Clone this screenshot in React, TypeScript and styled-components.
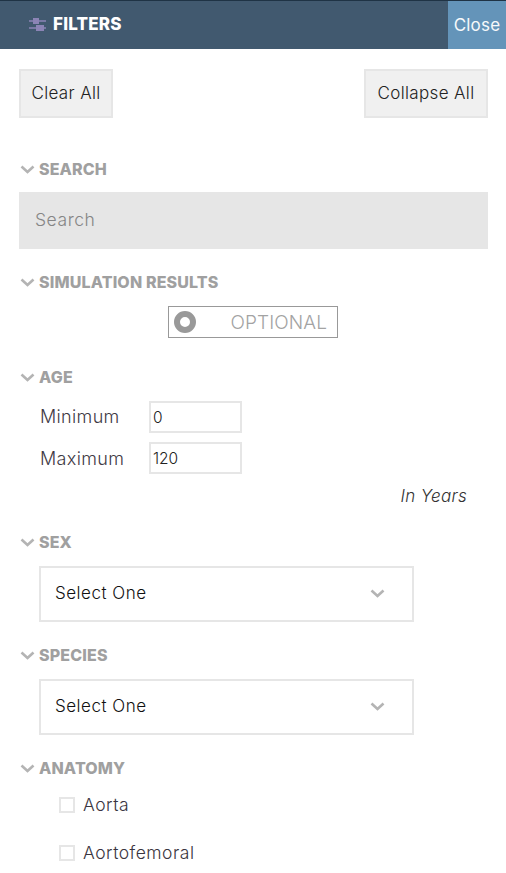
import React from 'react';
import styled, { createGlobalStyle } from 'styled-components';

const GlobalStyle = createGlobalStyle`
  html, body {
    margin: 0;
    padding: 0;
    background: #fff;
    overflow: hidden;
  }
  * { box-sizing: border-box; }
`;

const Panel = styled.div`
  width: 506px;
  height: 873px;
  overflow: hidden;
  font-family: Inter, 'Liberation Sans', sans-serif;
  color: #222;
`;

const Header = styled.header`
  height: 49px;
  background: #41596f;
  border-top: 1px solid #1f3345;
  display: flex;
  align-items: stretch;
  justify-content: space-between;
`;

const HeaderTitle = styled.div`
  display: flex;
  align-items: center;
  gap: 7px;
  padding: 0 0 2px 29px;
  color: #fff;
  font-size: 17px;
  font-weight: 800;
  letter-spacing: 0.2px;
`;

const CloseButton = styled.div`
  width: 58px;
  background: #6494b9;
  color: #f7f9fb;
  font-size: 17px;
  letter-spacing: 0.2px;
  padding-bottom: 1px;
  display: flex;
  align-items: center;
  justify-content: center;
`;

const Actions = styled.div`
  display: flex;
  justify-content: space-between;
  padding: 20px 18px 0 19px;
`;

const ActionButton = styled.div<{ $width: number }>`
  width: ${(p) => p.$width}px;
  height: 49px;
  padding-bottom: 2px;
  background: #f0f0f0;
  border: 2px solid #e6e6e6;
  display: flex;
  align-items: center;
  justify-content: center;
  font-size: 17px;
  font-weight: 300;
  letter-spacing: 0.35px;
  color: #222;
`;

const Section = styled.section<{ $top: number }>`
  margin-top: ${(p) => p.$top}px;
`;

const SectionTitle = styled.div`
  height: 20px;
  padding-left: 20px;
  display: flex;
  align-items: center;
  gap: 4px;
  color: #a0a0a0;
  font-size: 16px;
  font-weight: 800;
  letter-spacing: 0.15px;
`;

const SearchBox = styled.div`
  margin: 13px 18px 0 19px;
  height: 57px;
  padding: 0 0 2px 16px;
  background: #e6e6e6;
  color: #858585;
  font-size: 17.5px;
  font-weight: 300;
  letter-spacing: 0.55px;
  display: flex;
  align-items: center;
`;

const Toggle = styled.div`
  margin: 14px 0 0 168px;
  width: 170px;
  height: 32px;
  border: 1px solid #999;
  display: flex;
  align-items: center;
  justify-content: space-between;
  padding: 0 10px 0 5px;
  color: #a3a3a3;
  font-size: 19px;
  font-weight: 300;
  letter-spacing: 0.1px;
`;

const ToggleKnob = styled.span`
  width: 22px;
  height: 22px;
  border-radius: 50%;
  border: 6px solid #999;
  background: #fff;
`;

const AgeRows = styled.div`
  margin-top: 14px;
  padding-left: 40px;
  display: flex;
  flex-direction: column;
  gap: 9px;
`;

const AgeRow = styled.div`
  display: flex;
  align-items: center;
`;

const AgeLabel = styled.span<{ $lift: number }>`
  width: 109px;
  padding-bottom: ${(p) => p.$lift}px;
  font-size: 18px;
  font-weight: 300;
  letter-spacing: 0.35px;
  color: #3f3a45;
`;

const NumberBox = styled.div`
  width: 93px;
  height: 32px;
  border: 2px solid #e6e6e6;
  padding-left: 2px;
  display: flex;
  align-items: center;
  font-size: 15.5px;
  font-weight: 300;
  color: #222;
`;

const Units = styled.div`
  margin-top: 12px;
  padding-right: 39px;
  text-align: right;
  font-size: 17px;
  font-style: italic;
  font-weight: 300;
  letter-spacing: 0.3px;
  color: #333;
  line-height: 20px;
`;

const SelectBox = styled.div`
  margin: 14px 0 0 39px;
  width: 375px;
  height: 56px;
  border: 2px solid #e6e6e6;
  display: flex;
  align-items: center;
  justify-content: space-between;
  padding: 0 27px 2px 14px;
  font-size: 17px;
  font-weight: 300;
  letter-spacing: 0.5px;
  color: #111;
`;

const CheckList = styled.div`
  margin-top: 19px;
  padding-left: 59px;
  display: flex;
  flex-direction: column;
  gap: 32px;
`;

const CheckRow = styled.div`
  display: flex;
  align-items: center;
  gap: 8px;
  height: 16px;
  font-size: 17.5px;
  font-weight: 300;
  letter-spacing: 0.5px;
  color: #3a3540;
`;

const CheckLabel = styled.span`
  margin-top: -2px;
`;

const CheckBox = styled.span`
  width: 16px;
  height: 16px;
  border: 2px solid #e6e6e6;
  background: #fff;
`;

const Chevron: React.FC = () => (
  <svg width="15" height="9" viewBox="0 0 15 9" aria-hidden="true">
    <path d="M1.5 1.5 7.5 7 13.5 1.5" fill="none" stroke="#b4b4b4" strokeWidth="2.6" />
  </svg>
);

const SlidersIcon: React.FC = () => (
  <svg width="17" height="15" viewBox="0 0 17 15" aria-hidden="true">
    <g fill="#8b84b5">
      <rect x="0" y="3" width="17" height="2" opacity="0.75" />
      <rect x="4" y="1" width="6" height="6" />
      <rect x="0" y="10" width="17" height="2" opacity="0.75" />
      <rect x="7" y="8" width="8" height="6" />
    </g>
  </svg>
);

const App: React.FC = () => (
  <Panel>
    <GlobalStyle />
    <Header>
      <HeaderTitle>
        <SlidersIcon />
        FILTERS
      </HeaderTitle>
      <CloseButton>Close</CloseButton>
    </Header>
    <Actions>
      <ActionButton $width={94}>Clear All</ActionButton>
      <ActionButton $width={124}>Collapse All</ActionButton>
    </Actions>

    <Section $top={41}>
      <SectionTitle>
        <Chevron />
        SEARCH
      </SectionTitle>
      <SearchBox>Search</SearchBox>
    </Section>

    <Section $top={23}>
      <SectionTitle>
        <Chevron />
        SIMULATION RESULTS
      </SectionTitle>
      <Toggle>
        <ToggleKnob />
        OPTIONAL
      </Toggle>
    </Section>

    <Section $top={29}>
      <SectionTitle>
        <Chevron />
        AGE
      </SectionTitle>
      <AgeRows>
        <AgeRow>
          <AgeLabel $lift={2}>Minimum</AgeLabel>
          <NumberBox>0</NumberBox>
        </AgeRow>
        <AgeRow>
          <AgeLabel $lift={0}>Maximum</AgeLabel>
          <NumberBox>120</NumberBox>
        </AgeRow>
      </AgeRows>
      <Units>In Years</Units>
    </Section>

    <Section $top={26}>
      <SectionTitle>
        <Chevron />
        SEX
      </SectionTitle>
      <SelectBox>
        Select One
        <Chevron />
      </SelectBox>
    </Section>

    <Section $top={23}>
      <SectionTitle>
        <Chevron />
        SPECIES
      </SectionTitle>
      <SelectBox>
        Select One
        <Chevron />
      </SelectBox>
    </Section>

    <Section $top={23}>
      <SectionTitle>
        <Chevron />
        ANATOMY
      </SectionTitle>
      <CheckList>
        <CheckRow>
          <CheckBox />
          <CheckLabel>Aorta</CheckLabel>
        </CheckRow>
        <CheckRow>
          <CheckBox />
          <CheckLabel>Aortofemoral</CheckLabel>
        </CheckRow>
      </CheckList>
    </Section>
  </Panel>
);

export default App;
